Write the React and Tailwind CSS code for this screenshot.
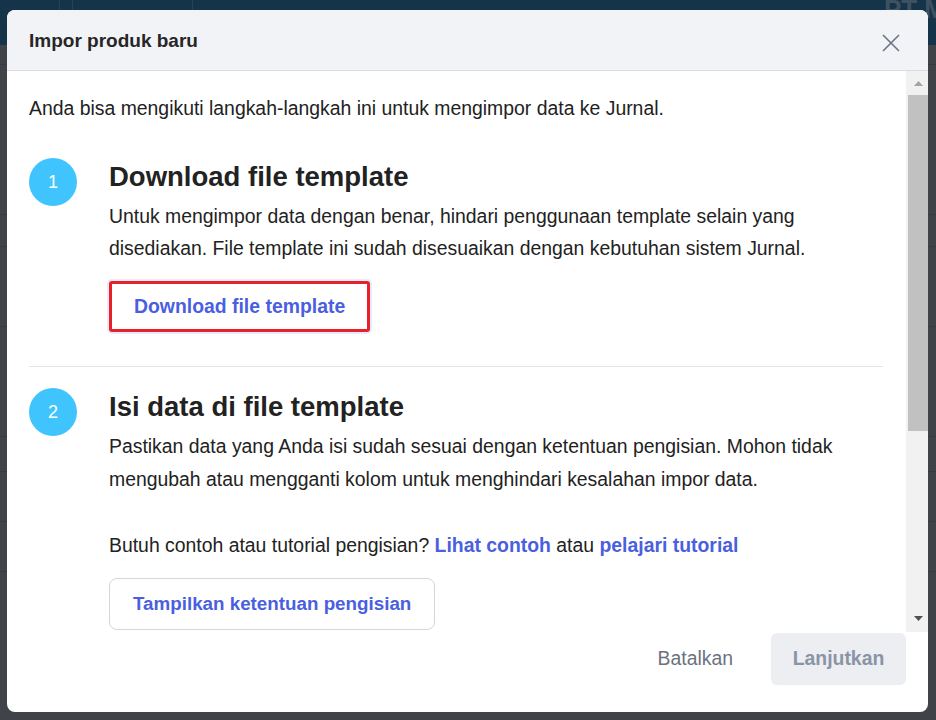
import React from "react";

const font = { fontFamily: '"Liberation Sans", Arial, sans-serif' };

const StepBadge = ({ n }) => (
  <div className="w-12 h-12 shrink-0 rounded-full bg-[#40c4fe] text-white text-[18px] flex items-center justify-center">
    {n}
  </div>
);

const Backdrop = () => (
  <div className="absolute inset-0 flex flex-col bg-[#404449]">
    <div className="h-[45px] bg-[#15344a] flex items-start">
      <div className="w-[60px] h-full border-r border-[#24445a]" />
      <div className="w-[13px] h-full border-r border-[#24445a]" />
      <div className="w-[120px] h-full border-r border-[#24445a]" />
      <div className="flex-1" />
      <div className="text-[26px] font-bold text-[#3e5161] leading-none mr-[-10px] mt-[-4px]">PT M</div>
    </div>
    <div className="h-[20px] border-b border-[#383c41]" />
    <div className="h-[150px] border-b border-[#383c41]" />
    <div className="h-[32px] border-b border-[#383c41]" />
    <div className="h-[80px] border-b border-[#383c41]" />
    <div className="h-[110px] border-b border-[#383c41]" />
    <div className="h-[35px] border-b border-[#383c41]" />
    <div className="h-[50px] border-b border-[#383c41]" />
    <div className="h-[50px] border-b border-[#383c41]" />
  </div>
);

const Scrollbar = () => (
  <div className="w-[22px] shrink-0 bg-[#f1f1f1] flex flex-col items-center pl-[2px]">
    <div className="h-[24px] flex items-center justify-center">
      <svg width="9" height="5" viewBox="0 0 9 5"><path d="M4.5 0L9 5H0z" fill="#a3a3a3" /></svg>
    </div>
    <div className="w-[20px] h-[336px] bg-[#c1c1c1]" />
    <div className="flex-1" />
    <div className="h-[24px] flex items-center justify-center mb-[2px]">
      <svg width="9" height="5" viewBox="0 0 9 5"><path d="M0 0H9L4.5 5z" fill="#505050" /></svg>
    </div>
  </div>
);

export default function App() {
  return (
    <div className="relative w-[936px] h-[720px] overflow-hidden" style={font}>
      <Backdrop />
      <div className="absolute left-[7px] top-[10px] w-[921px] h-[702px] bg-white rounded-[8px] overflow-hidden flex flex-col">
        <div className="h-[61px] shrink-0 bg-[#f2f3f7] border-b border-[#d9dde3] flex items-center justify-between pl-[22px] pr-[28px]">
          <h2 className="text-[19px] font-bold text-[#262626] pt-[2px]">Impor produk baru</h2>
          <svg width="18" height="18" viewBox="0 0 18 18" className="mt-[6px]">
            <path d="M1 1L17 17M17 1L1 17" stroke="#6b7280" strokeWidth="1.6" />
          </svg>
        </div>

        <div className="flex-1 min-h-0 flex">
          <div className="flex-1 min-w-0 overflow-hidden pl-[22px] pr-[23px] pt-[25px]">
            <p className="text-[19.4px] text-[#222] leading-[24px]">
              Anda bisa mengikuti langkah-langkah ini untuk mengimpor data ke Jurnal.
            </p>

            <div className="flex gap-[32px] pt-[38px]">
              <StepBadge n={1} />
              <div className="flex-1 pt-[2px]">
                <h3 className="text-[27.5px] font-bold text-[#222] leading-[34px]">Download file template</h3>
                <p className="text-[19.4px] text-[#222] leading-[32px] mt-[6px]">
                  Untuk mengimpor data dengan benar, hindari penggunaan template selain yang disediakan. File template ini sudah disesuaikan dengan kebutuhan sistem Jurnal.
                </p>
                <div className="mt-[17px] flex">
                  <button className="h-[51px] px-[22px] border-[3px] border-[#e8202a] rounded-[3px] bg-white text-[19.4px] font-bold text-[#4a5fe0] shadow-[0_0_0_2px_#e6ecfb]">
                    Download file template
                  </button>
                </div>
              </div>
            </div>

            <div className="border-t border-[#e2e5ec] mt-[34px]" />

            <div className="flex gap-[32px] pt-[21px]">
              <StepBadge n={2} />
              <div className="flex-1 pt-[2px]">
                <h3 className="text-[27.5px] font-bold text-[#222] leading-[34px]">Isi data di file template</h3>
                <p className="text-[19.4px] text-[#222] leading-[33px] mt-[6px]">
                  Pastikan data yang Anda isi sudah sesuai dengan ketentuan pengisian. Mohon tidak mengubah atau mengganti kolom untuk menghindari kesalahan impor data.
                </p>
                <p className="text-[19.4px] text-[#222] leading-[32px] mt-[33px]">
                  Butuh contoh atau tutorial pengisian?{" "}
                  <span className="font-bold text-[#4a5fe0]">Lihat contoh</span> atau{" "}
                  <span className="font-bold text-[#4a5fe0]">pelajari tutorial</span>
                </p>
                <button className="mt-[17px] h-[52px] px-[23px] border border-[#d3d7de] rounded-[8px] bg-white text-[18.8px] font-bold text-[#4a5fe0]">
                  Tampilkan ketentuan pengisian
                </button>
              </div>
            </div>
          </div>
          <Scrollbar />
        </div>

        <div className="h-[80px] shrink-0 flex items-start justify-end gap-[38px] pr-[22px] pt-[1px]">
          <button className="h-[52px] text-[19.4px] text-[#6b7280]">Batalkan</button>
          <button className="h-[52px] w-[135px] rounded-[6px] bg-[#eceef2] text-[19.4px] font-bold text-[#8a94a6]">
            Lanjutkan
          </button>
        </div>
      </div>
    </div>
  );
}
